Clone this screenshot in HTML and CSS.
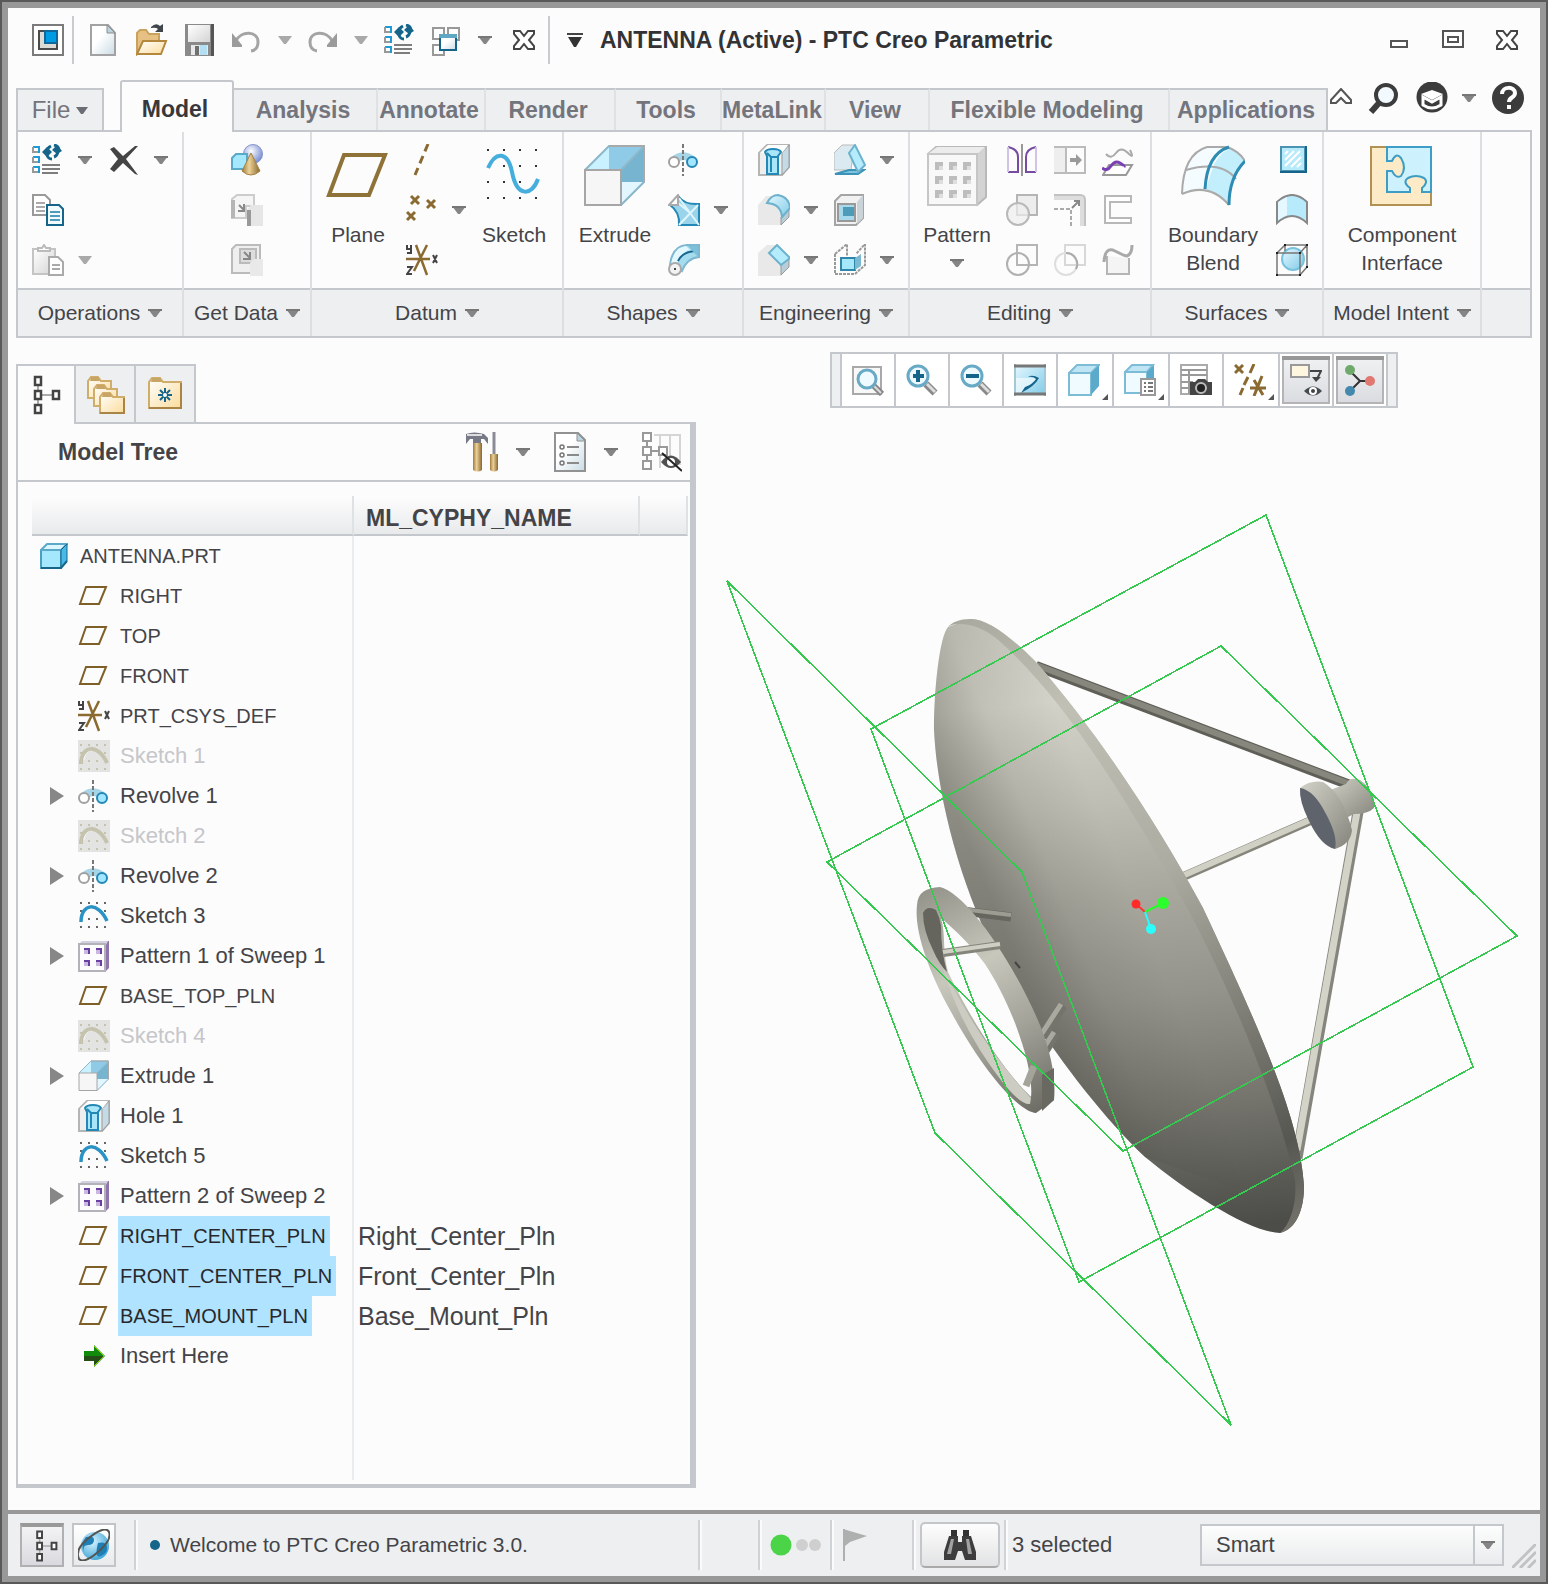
FILE: index.html
```html
<!DOCTYPE html>
<html lang="en">
<head>
<meta charset="utf-8">
<meta name="viewport" content="width=device-width, initial-scale=1">
<title>ANTENNA (Active) - PTC Creo Parametric</title>
<link rel="stylesheet" href="styles.css">
</head>
<body>
<svg class="defs" aria-hidden="true">
  <defs>
    <linearGradient id="gBlue" x1="0" y1="0" x2="1" y2="1"><stop offset="0" stop-color="#e6f8ff"/><stop offset="1" stop-color="#7fcbe8"/></linearGradient>
    <linearGradient id="gPaper" x1="0" y1="0" x2="1" y2="1"><stop offset=".4" stop-color="#fff"/><stop offset="1" stop-color="#c9dbe4"/></linearGradient>
    <linearGradient id="gFolder" x1="0" y1="0" x2="1" y2="1"><stop offset="0" stop-color="#fff"/><stop offset="1" stop-color="#fbdc9c"/></linearGradient>
    <linearGradient id="gWood" x1="0" y1="0" x2="1" y2="0"><stop offset="0" stop-color="#a07a3c"/><stop offset=".4" stop-color="#ecd298"/><stop offset="1" stop-color="#8a6630"/></linearGradient>
    <linearGradient id="gGrey" x1="0" y1="0" x2="1" y2="1"><stop offset="0" stop-color="#fff"/><stop offset="1" stop-color="#d4d4d4"/></linearGradient>
    <radialGradient id="gBall" cx=".4" cy=".35" r=".7"><stop offset="0" stop-color="#fff"/><stop offset="1" stop-color="#6e86cf"/></radialGradient>
    <radialGradient id="gGlobe" cx=".4" cy=".35" r=".7"><stop offset="0" stop-color="#d8f4ff"/><stop offset="1" stop-color="#3aa3d6"/></radialGradient>
    <linearGradient id="dishV" gradientUnits="userSpaceOnUse" x1="1050" y1="620" x2="1120" y2="1240"><stop offset="0" stop-color="#c9c8be"/><stop offset=".13" stop-color="#d3d2c8"/><stop offset=".3" stop-color="#bfbeb4"/><stop offset=".45" stop-color="#a9a89f"/><stop offset=".62" stop-color="#94938b"/><stop offset=".8" stop-color="#74746d"/><stop offset="1" stop-color="#4c4c48"/></linearGradient>
    <linearGradient id="dishH" gradientUnits="userSpaceOnUse" x1="934" y1="760" x2="1056" y2="710"><stop offset="0" stop-color="#45453e" stop-opacity=".42"/><stop offset=".5" stop-color="#45453e" stop-opacity=".12"/><stop offset="1" stop-color="#45453e" stop-opacity="0"/></linearGradient>
    <linearGradient id="rim" gradientUnits="userSpaceOnUse" x1="960" y1="620" x2="1300" y2="1230"><stop offset="0" stop-color="#a9a99f"/><stop offset=".18" stop-color="#c0c0b5"/><stop offset=".45" stop-color="#acaca2"/><stop offset=".7" stop-color="#7c7c74"/><stop offset=".88" stop-color="#575752"/><stop offset="1" stop-color="#74746c"/></linearGradient>
    <linearGradient id="ring" gradientUnits="userSpaceOnUse" x1="930" y1="890" x2="1050" y2="1110"><stop offset="0" stop-color="#96958c"/><stop offset=".35" stop-color="#c8c7bc"/><stop offset=".65" stop-color="#a3a299"/><stop offset="1" stop-color="#6a6a63"/></linearGradient>
    <linearGradient id="horn" x1="0" y1="0" x2="1" y2="1"><stop offset="0" stop-color="#d3d2c8"/><stop offset="1" stop-color="#84847c"/></linearGradient>

    <symbol id="regen" viewBox="0 0 32 32"><path d="M1 3h6M7 2v7M1 13h6M7 12v7M1 23h6M7 22v7" stroke="#1e9ad6" stroke-width="2"/><path d="M1 3v5h5M1 13v5h5M1 23v5h5" fill="none" stroke="#999" stroke-width="2"/><path d="M10 21h18M10 25h18M10 29h16" stroke="#7d7d7d" stroke-width="2"/><path d="M14 8q1-4 5-6M27 7q0-5-5-6M15 11q1 4 5 4M26 8q-1 4-4 5" fill="none" stroke="#15658a" stroke-width="3"/><path d="M10 8l5-5 5 5-5 5zM20 6l5-5 5 6-5 3z" fill="#15658a"/></symbol>
    <symbol id="plane" viewBox="0 0 32 32"><path d="M8 7h20l-7 17H2z" fill="none" stroke="#7f5f28" stroke-width="2"/></symbol>
    <symbol id="csys" viewBox="0 0 32 32"><path d="M0 15h24M10 1l11 30M21 1 8 27" stroke="#8a6a30" stroke-width="2.500" fill="none"/><path d="M1 1v4h4V1m0 3v5H1M1 23h5l-5 7h5M27 11l4 8M31 11l-4 8" fill="none" stroke="#444" stroke-width="2"/></symbol>
    <symbol id="sketch" viewBox="0 0 32 32"><path d="M2 3h2m6 0h2m6 0h2m6 0h2M2 11h2m22 0h2M10 19h2m6 0h2M2 27h2m6 0h2m6 0h2m6 0h2" stroke="#666" stroke-width="2"/><path d="M3 22C3 3 20 1 29 21" fill="none" stroke="#2a92c4" stroke-width="3.500"/></symbol>
    <symbol id="sketch-off" viewBox="0 0 32 32"><path d="M0 0h32v32H0z" fill="#e3e3e2"/><path d="M2 5h2m6 0h2m6 0h2m6 0h2M2 13h2m22 0h2M10 21h2m6 0h2M2 29h2m6 0h2m6 0h2m6 0h2" stroke="#c5c3ae" stroke-width="2"/><path d="M5 20C7 8 20 5 28 20" fill="none" stroke="#fff" stroke-width="2"/><path d="M3 24C3 5 20 3 29 23" fill="none" stroke="#c5c3ae" stroke-width="4"/></symbol>
    <symbol id="revolve" viewBox="0 0 32 32"><path d="M2 16C6 6 24 6 29 16l-8 2q-5-4-11 0z" fill="#a7d5e8"/><circle cx="6" cy="18" r="5" fill="#fff" stroke="#a0a0a0" stroke-width="2"/><circle cx="24" cy="18" r="5" fill="#a2e6ff" stroke="#2388b5" stroke-width="2"/><path d="M15 0v32" stroke="#777" stroke-width="2" stroke-dasharray="4 2"/></symbol>
    <symbol id="extrude" viewBox="0 0 64 64"><path d="M2 26 26 2h36L38 26z" fill="#c9f1ff"/><path d="M26 2h36L38 26H26z" fill="#8fcbe6"/><path d="M38 26 62 2v36L38 62z" fill="#76b4d0"/><path d="M38 62V38h24z" fill="#e1f6ff"/><path d="M2 26 26 2h35v36L38 61M38 26 61 2" fill="none" stroke="#8db8ca" stroke-width="2"/><path d="M26 2h35v36" fill="none" stroke="#a9a9a9" stroke-width="2"/><path d="M2 26h36v35H2z" fill="#f6f6f6" stroke="#a6a6a6" stroke-width="2"/></symbol>
    <symbol id="hole" viewBox="0 0 32 32"><path d="M1 9 9 1h22v22l-7 8H1z" fill="#eee" stroke="#b5b5b5" stroke-width="2"/><path d="M24 9l7-8v22l-7 8z" fill="#c4dbe6" stroke="#999"/><path d="M2 9l8-8h20l-6 8z" fill="#fff"/><path d="M7 8c2-4 14-4 16 0l-3 4v18H9V12z" fill="#a9e6fa" stroke="#2388b5" stroke-width="2"/><path d="M9 9l4 4h6M13 13v15" fill="none" stroke="#2388b5" stroke-width="2"/></symbol>
    <symbol id="pattern-s" viewBox="0 0 32 32"><path d="M5 1h26v27l-3 3z" fill="#8e76ad"/><path d="M1 4 4 1h26l-2 4z" fill="#d5cfe2"/><path d="M1 4h26v27H1z" fill="#fdfdff" stroke="#b2b2b8" stroke-width="2"/><path d="M6 8h6v6H6zM18 8h6v6h-6zM6 20h6v6H6zM18 20h6v6h-6z" fill="#c9b8e0"/><path d="M6 9h5v5M18 9h5v5M6 21h5v5M18 21h5v5" fill="none" stroke="#6b3fa0" stroke-width="2"/></symbol>
    <symbol id="part" viewBox="0 0 28 26"><path d="M1 7h20v18H1z" fill="#a5e7fd" stroke="#4a9fc0" stroke-width="2"/><path d="M1 7 7 1h20l-6 6z" fill="#dcf6ff" stroke="#5aa9c8" stroke-width="2"/><path d="M21 7l6-6v17l-6 7z" fill="#49b9e8" stroke="#17658a" stroke-width="1"/><path d="M1 25h20l6-7" fill="none" stroke="#17658a" stroke-width="2"/></symbol>
    <symbol id="arrow-in" viewBox="0 0 32 32"><path d="M6 11h10V5l11 11-11 11v-6H6z" fill="#118b0c"/><path d="M6 16h20L16 26v-5H6z" fill="#264d18"/><path d="M16 6l10 10-10 10" fill="none" stroke="#86c800" stroke-width="1"/></symbol>
    <symbol id="tree" viewBox="0 0 40 40"><path d="M12 4v32M12 20h14" stroke="#aaa" stroke-width="2"/><path d="M9 2h6v8H9zM9 16h6v8H9zM9 30h6v8H9zM27 16h6v8h-6z" fill="#fff" stroke="#444" stroke-width="2.500"/></symbol>
    <symbol id="caret" viewBox="0 0 14 8"><path d="M0 0h14L8 8H6z" fill="#858585"/><path d="M0 1h14" stroke="#777" stroke-width="2"/></symbol>
    <symbol id="caret-off" viewBox="0 0 14 8"><path d="M0 0h14L8 8H6z" fill="#a9a9a9"/></symbol>
    <symbol id="twist" viewBox="0 0 14 18"><path d="M0 0l14 9L0 18z" fill="#878787"/></symbol>
    <symbol id="xmark" viewBox="0 0 24 24"><path d="M2 3h6l4 5 4-5h6v3l-5 6 5 6v3h-6l-4-5-4 5H2v-3l5-6-5-6z" fill="#fff" stroke="#444" stroke-width="2"/></symbol>
    <symbol id="lens" viewBox="0 0 32 32"><path d="M20 20l9 9" stroke="#888" stroke-width="7"/><path d="M21 20l8 8" stroke="#ddd" stroke-width="3"/><circle cx="12" cy="12" r="10" fill="#eefaff" stroke="#68a9c5" stroke-width="3"/></symbol>
  </defs>
</svg>

<div class="window">
  <header class="titlebar">
    <button class="ib" aria-label="System menu"><svg class="i32" viewBox="0 0 32 32"><path d="M1 1h30v30H1z" fill="#fff" stroke="#7b7b7b" stroke-width="2"/><path d="M7 7h18v18H7z" fill="#dcdcd6" stroke="#4a4a4a" stroke-width="2"/><path d="M13 7h12v12H13z" fill="#009be5" stroke="#10679a" stroke-width="2"/></svg></button>
    <span class="vsep"></span>
    <div class="quick">
      <button class="ib" aria-label="New"><svg class="i32" viewBox="0 0 32 32"><path d="M3 1h17l7 8v22H3z" fill="url(#gPaper)" stroke="#a2a2a2" stroke-width="2"/><path d="M19 1v8h8z" fill="#b9d3e0" stroke="#8d8d8d"/></svg></button>
      <button class="ib" aria-label="Open"><svg class="i32" viewBox="0 0 32 32"><path d="M1 30V9l3-3h6l3 4h10v8H9z" fill="#e6c183" stroke="#c9a35e" stroke-width="2"/><path d="M1 30l6-13h23l-5 13z" fill="url(#gFolder)" stroke="#b3883e" stroke-width="2"/><path d="M15 3q5-5 9-1l3-2v8h-8l3-3q-2-2-7-1z" fill="#40474c"/></svg></button>
      <button class="ib" aria-label="Save"><svg class="i32" viewBox="0 0 32 32"><path d="M1 0h28v32H1z" fill="#8a8a8a"/><path d="M4 1h22v17H4z" fill="url(#gGrey)"/><path d="M27 0h3v32h-3z" fill="#555"/><path d="M7 21h17v10H7z" fill="#e8e8e8"/><path d="M11 22h4v9h-4z" fill="#707070"/><path d="M16 21h7v10h-7z" fill="#b4dff2"/></svg></button>
      <span class="split"><button class="ib" aria-label="Undo"><svg class="i32" viewBox="0 0 32 32"><path d="M4 17C9 6 26 7 26 18q0 8-7 9" fill="none" stroke="#a4a4a4" stroke-width="3"/><path d="M0 9l10 12v2H0z" fill="#9b9b9b"/></svg></button><button class="cb" aria-label="Undo list"><svg class="car"><use href="#caret-off"/></svg></button></span>
      <span class="split"><button class="ib" aria-label="Redo"><svg class="i32" viewBox="0 0 32 32"><path d="M24 17C19 6 2 7 2 18q0 8 7 9" fill="none" stroke="#a4a4a4" stroke-width="3"/><path d="M29 9 19 21v2h10z" fill="#9b9b9b"/></svg></button><button class="cb" aria-label="Redo list"><svg class="car"><use href="#caret-off"/></svg></button></span>
      <button class="ib" aria-label="Regenerate"><svg class="i32"><use href="#regen"/></svg></button>
      <span class="split"><button class="ib" aria-label="Windows"><svg class="i32" viewBox="0 0 32 32"><path d="M1 4h11v11H1zM16 4h11v12H16zM1 21h11v10H1z" fill="#fff" stroke="#999" stroke-width="2"/><path d="M8 12h16v14H8z" fill="url(#gPaper)" stroke="#15658a" stroke-width="2"/><path d="M7 12h18" stroke="#5fa8c4" stroke-width="4"/></svg></button><button class="cb" aria-label="Window list"><svg class="car"><use href="#caret"/></svg></button></span>
      <button class="ib" aria-label="Close window"><svg class="i24"><use href="#xmark"/></svg></button>
    </div>
    <span class="vsep"></span>
    <button class="ib more" aria-label="Customize toolbar"><svg width="16" height="14" viewBox="0 0 16 14"><path d="M0 1h16" stroke="#444" stroke-width="2"/><path d="M1 4h14L9 14H7z" fill="#333"/></svg></button>
    <h1 class="title">ANTENNA (Active) - PTC Creo Parametric</h1>
    <div class="winctl">
      <button class="ib" aria-label="Minimize"><svg class="i32" viewBox="0 0 32 32"><path d="M8 17h16v6H8z" fill="#fff" stroke="#555" stroke-width="2"/></svg></button>
      <button class="ib" aria-label="Maximize"><svg class="i32" viewBox="0 0 32 32"><path d="M6 7h20v16H6z" fill="#fff" stroke="#555" stroke-width="2"/><path d="M11 13h10v5H11z" fill="#fff" stroke="#555" stroke-width="2"/></svg></button>
      <button class="ib" aria-label="Close"><svg class="i24"><use href="#xmark"/></svg></button>
    </div>
  </header>

  <nav class="tabs" aria-label="Ribbon tabs">
    <button class="tab file">File <svg width="12" height="7" viewBox="0 0 12 7"><path d="M0 0h12L7 7H5z" fill="#6c6c74"/></svg></button>
    <button class="tab model">Model</button>
    <button class="tab t-analysis">Analysis</button>
    <button class="tab t-annotate">Annotate</button>
    <button class="tab t-render">Render</button>
    <button class="tab t-tools">Tools</button>
    <button class="tab t-metalink">MetaLink</button>
    <button class="tab t-view">View</button>
    <button class="tab t-flex">Flexible Modeling</button>
    <button class="tab t-apps">Applications</button>
    <div class="help">
      <button class="ib" aria-label="Collapse ribbon"><svg width="22" height="20" viewBox="0 0 22 20"><path d="M1 12 11 1l10 11v3h-5l-5-5-5 5H1z" fill="#fff" stroke="#555" stroke-width="2"/></svg></button>
      <button class="ib" aria-label="Search"><svg class="i32" viewBox="0 0 32 32"><path d="M11 21l-8 9" stroke="#3c3c3c" stroke-width="6"/><circle cx="18" cy="13" r="10" fill="#f3faff" stroke="#3c3c3c" stroke-width="4"/></svg></button>
      <span class="split"><button class="ib" aria-label="Learning"><svg class="i32" viewBox="0 0 32 32"><circle cx="16" cy="15" r="15.500" fill="#3c3c3c"/><path d="M5 12l11-4 11 4-11 6z" fill="#fff"/><path d="M7 15l9 5 9-5v8q-9 6-18 0z" fill="none" stroke="#fff" stroke-width="3"/></svg></button><button class="cb" aria-label="Learning list"><svg class="car"><use href="#caret"/></svg></button></span>
      <button class="ib" aria-label="Help"><svg class="i32" viewBox="0 0 32 32"><circle cx="16" cy="16" r="16" fill="#3c3c3c"/><path d="M10 12c0-8 13-8 13-1 0 5-6 4-6 9" fill="none" stroke="#fff" stroke-width="4"/><path d="M15 23h4v4h-4z" fill="#fff"/></svg></button>
    </div>
  </nav>

  <section class="ribbon" aria-label="Model">
    <div class="grp g-ops">
      <div class="body"><div class="col">
        <div class="row"><span class="split"><button class="ib" aria-label="Regenerate"><svg class="i32"><use href="#regen"/></svg></button><button class="cb" aria-label="More"><svg class="car"><use href="#caret"/></svg></button></span>
        <span class="split"><button class="ib" aria-label="Delete"><svg class="i32" viewBox="0 0 32 32"><path d="M2 5l4-2 9 9L27 2l3 0-12 13 12 16-3-1-12-11-9 9-4-3 8-10z" fill="#444"/></svg></button><button class="cb" aria-label="More"><svg class="car"><use href="#caret"/></svg></button></span></div>
        <button class="ib" aria-label="Copy"><svg class="i32" viewBox="0 0 32 32"><path d="M1 1h12l5 5v15H1z" fill="#fff" stroke="#999" stroke-width="2"/><path d="M4 9h9M4 13h9M4 17h9" stroke="#aaa" stroke-width="2"/><path d="M15 11h12l4 4v16H15z" fill="#f0faff" stroke="#15658a" stroke-width="2"/><path d="M18 18h10M18 22h10M18 26h10" stroke="#4d9cbd" stroke-width="2"/></svg></button>
        <span class="split"><button class="ib" aria-label="Paste"><svg class="i32" viewBox="0 0 32 32"><path d="M1 5h22v25H1z" fill="url(#gGrey)" stroke="#c4c4c4" stroke-width="2"/><path d="M6 7V4h4l2-3 2 3h4v3z" fill="#fff" stroke="#bbb" stroke-width="2"/><path d="M17 13h9l5 5v13H17z" fill="#fff" stroke="#aaa" stroke-width="2"/><path d="M20 21h8M20 25h8" stroke="#aaa" stroke-width="2"/></svg></button><button class="cb" aria-label="More"><svg class="car"><use href="#caret-off"/></svg></button></span>
      </div></div>
      <button class="foot">Operations<svg class="car"><use href="#caret"/></svg></button>
    </div>
    <div class="grp g-get">
      <div class="body center"><div class="col">
        <button class="ib" aria-label="User-defined feature"><svg class="i32" viewBox="0 0 32 32"><circle cx="22" cy="10" r="9.500" fill="url(#gBall)" stroke="#8796cc"/><path d="M1 14l4-4h11v15H1z" fill="#a5e7fd" stroke="#5aa9c8" stroke-width="2"/><path d="M20 9l9 18q-9 8-18 0z" fill="url(#gWood)" stroke="#a5813f"/></svg></button>
        <button class="ib" aria-label="Copy geometry"><svg class="i32" viewBox="0 0 32 32"><path d="M1 5 6 1h17v11h-8v12H1z" fill="#f5f5f5" stroke="#ccc" stroke-width="2"/><path d="M0 6h4v18H0z" fill="#b5b5b5"/><path d="M16 16l4-5h12v21H16z" fill="#e6e6e6"/><path d="M16 16h4v16h-4z" fill="#999"/><path d="M8 11l5 5m0-6v7H7" fill="none" stroke="#888" stroke-width="2"/></svg></button>
        <button class="ib" aria-label="Shrinkwrap"><svg class="i32" viewBox="0 0 32 32"><path d="M1 5 5 1h24v15l-8 13H1z" fill="#efefef" stroke="#bbb" stroke-width="2"/><path d="M9 5h16v14H9z" fill="#ddd" stroke="#bbb" stroke-width="2"/><path d="M19 19l4-4h9v17H19z" fill="#e9e9e9"/><path d="M13 8l6 6m0-6v7h-7" fill="none" stroke="#888" stroke-width="2"/></svg></button>
      </div></div>
      <button class="foot">Get Data<svg class="car"><use href="#caret"/></svg></button>
    </div>
    <div class="grp g-datum">
      <div class="body">
        <button class="big"><svg class="i64" viewBox="0 0 64 64"><path d="M18 11h41L43 51H3z" fill="none" stroke="#8f7238" stroke-width="4"/></svg><span>Plane</span></button>
        <div class="col">
          <button class="ib" aria-label="Axis"><svg class="i32" viewBox="0 0 32 32"><path d="M22 0 9 31" stroke="#8a6a30" stroke-width="3" stroke-dasharray="8 5"/></svg></button>
          <span class="split"><button class="ib" aria-label="Point"><svg class="i32" viewBox="0 0 32 32"><path d="M5 2l8 8M13 2l-8 8M21 6l8 8M29 6l-8 8M1 18l8 8M9 18l-8 8" stroke="#8a6a30" stroke-width="3"/></svg></button><button class="cb" aria-label="More"><svg class="car"><use href="#caret"/></svg></button></span>
          <button class="ib" aria-label="Coordinate system"><svg class="i32"><use href="#csys"/></svg></button>
        </div>
        <button class="big"><svg class="i64" viewBox="0 0 64 64"><path d="M5 6h2m14 0h2m14 0h2m14 0h2M21 22h2m14 0h2m14 0h2M5 38h2m14 0h2m14 0h2M5 54h2m14 0h2m14 0h2m14 0h2" stroke="#333" stroke-width="2"/><path d="M6 24C14 6 26 8 30 28c5 26 20 24 26 7" fill="none" stroke="#45aedc" stroke-width="4"/></svg><span>Sketch</span></button>
      </div>
      <button class="foot">Datum<svg class="car"><use href="#caret"/></svg></button>
    </div>
    <div class="grp g-shapes">
      <div class="body">
        <button class="big"><svg class="i64"><use href="#extrude"/></svg><span>Extrude</span></button>
        <div class="col">
          <button class="ib" aria-label="Revolve"><svg class="i32"><use href="#revolve"/></svg></button>
          <span class="split"><button class="ib" aria-label="Swept blend"><svg class="i32" viewBox="0 0 32 32"><path d="M11 3q6 8 20 7v21H11Q12 18 2 11z" fill="#9ad4ea" stroke="#2388b5" stroke-width="2"/><path d="M11 4l20 27M30 11 11 31M9 8l12 10" stroke="#dff5fd" stroke-width="2"/><path d="M10 1v10H1z" fill="#fff" stroke="#aaa" stroke-width="2"/></svg></button><button class="cb" aria-label="More"><svg class="car"><use href="#caret"/></svg></button></span>
          <button class="ib" aria-label="Sweep"><svg class="i32" viewBox="0 0 32 32"><path d="M2 21Q4 2 19 1h12v12q-12 1-17 14z" fill="#a6dcf0" stroke="#7db8d0" stroke-width="2"/><path d="M3 20Q6 3 18 2l4 4q-9 2-12 12z" fill="#e3f7ff"/><path d="M10 17q5-10 19-10" fill="none" stroke="#17658a" stroke-width="2"/><path d="M20 2 30 13V2z" fill="#7cc0da"/><circle cx="7" cy="25" r="6" fill="#f3f3f3" stroke="#aaa" stroke-width="2"/><path d="M6 24h2v2H6z" fill="#444"/></svg></button>
        </div>
      </div>
      <button class="foot">Shapes<svg class="car"><use href="#caret"/></svg></button>
    </div>
    <div class="grp g-eng">
      <div class="body">
        <div class="col">
          <button class="ib" aria-label="Hole"><svg class="i32"><use href="#hole"/></svg></button>
          <span class="split"><button class="ib" aria-label="Round"><svg class="i32" viewBox="0 0 32 32"><path d="M0 11 8 2h10l13 11v9l-8 9H0z" fill="#e9e9e9"/><path d="M23 23l8-8v8l-8 8z" fill="#b9cdd8" stroke="#999"/><path d="M9 9q4-8 11-8 11 2 12 13l-8 9Q23 10 9 9z" fill="url(#gBlue)" stroke="#6db2cd" stroke-width="2"/></svg></button><button class="cb" aria-label="More"><svg class="car"><use href="#caret"/></svg></button></span>
          <span class="split"><button class="ib" aria-label="Chamfer"><svg class="i32" viewBox="0 0 32 32"><path d="M0 9 9 1h9l13 13v9l-8 9H0z" fill="#e9e9e9"/><path d="M23 21l8-7v9l-8 8z" fill="#b9cdd8" stroke="#999"/><path d="M11 9l8-8 13 13-9 7z" fill="#b5ecfd" stroke="#6db2cd" stroke-width="2"/></svg></button><button class="cb" aria-label="More"><svg class="car"><use href="#caret"/></svg></button></span>
        </div>
        <div class="col">
          <span class="split"><button class="ib" aria-label="Draft"><svg class="i32" viewBox="0 0 32 32"><path d="M0 9 8 1h12l-3 25H0z" fill="#dbe9f0" stroke="#bbb"/><path d="M1 30l14-4h15l-6 4z" fill="#7fc4de" stroke="#3b93b8" stroke-width="2"/><path d="M15 9l6-8 10 20-7 7z" fill="#b5ecfd" stroke="#6db2cd" stroke-width="2"/></svg></button><button class="cb" aria-label="More"><svg class="car"><use href="#caret"/></svg></button></span>
          <button class="ib" aria-label="Shell"><svg class="i32" viewBox="0 0 32 32"><path d="M1 7 7 1h22v23l-7 7H1z" fill="#f1f1f1" stroke="#a4a4a4" stroke-width="2"/><path d="M23 8l6-7v23l-6 6z" fill="#c9d3d8"/><path d="M4 10h17v17H4z" fill="#a7d8ec" stroke="#999" stroke-width="2"/><path d="M9 13h11v9H9z" fill="#4c9bb9"/></svg></button>
          <span class="split"><button class="ib" aria-label="Rib"><svg class="i32" viewBox="0 0 32 32"><path d="M1 10 13 0v12M1 10v20h20L31 21V0l-9 10" fill="none" stroke="#999" stroke-width="2" stroke-dasharray="3 1"/><path d="M7 14h14v12H7z" fill="#a5e7fd" stroke="#2f86a8" stroke-width="2"/><path d="M21 14l6-4v12l-6 4z" fill="#7ab9d1"/></svg></button><button class="cb" aria-label="More"><svg class="car"><use href="#caret"/></svg></button></span>
        </div>
      </div>
      <button class="foot">Engineering<svg class="car"><use href="#caret"/></svg></button>
    </div>
    <div class="grp g-edit">
      <div class="body">
        <button class="big"><svg class="i64" viewBox="0 0 64 64"><path d="M3 10 11 3h50v50l-9 8z" fill="#d3d3d3" stroke="#b9b9b9" stroke-width="2"/><path d="M4 9l8-6h48l-8 7z" fill="#ececec"/><path d="M3 10h49v51H3z" fill="#f8f8f8" stroke="#c6c6c6" stroke-width="2"/><path d="M10 18h8v8h-8zM24 18h8v8h-8zM38 18h8v8h-8zM10 32h8v8h-8zM24 32h8v8h-8zM38 32h8v8h-8zM10 46h8v8h-8zM24 46h8v8h-8zM38 46h8v8h-8z" fill="#bdbdbd"/><path d="M14 22h4v4h-4zM28 22h4v4h-4zM42 22h4v4h-4zM14 36h4v4h-4zM28 36h4v4h-4zM42 36h4v4h-4zM14 50h4v4h-4zM28 50h4v4h-4zM42 50h4v4h-4z" fill="#dedede"/></svg><span>Pattern</span><svg class="car"><use href="#caret"/></svg></button>
        <div class="col">
          <button class="ib" aria-label="Mirror"><svg class="i32" viewBox="0 0 32 32"><path d="M2 3q10 2 10 10v15H2" fill="none" stroke="#764ba0" stroke-width="2"/><path d="M30 3q-10 2-10 10v15h10" fill="none" stroke="#764ba0" stroke-width="2"/><path d="M2 3v25M30 3v25" stroke="#cfc3e6" stroke-width="2"/><path d="M16 0v32" stroke="#999" stroke-width="2"/></svg></button>
          <button class="ib" aria-label="Merge"><svg class="i32" viewBox="0 0 32 32"><path d="M11 1h20v20H11z" fill="#ededed" stroke="#b5b5b5" stroke-width="2"/><circle cx="12" cy="20" r="11" fill="#eee" fill-opacity=".7" stroke="#b9b9b9" stroke-width="2"/></svg></button>
          <button class="ib" aria-label="Intersect"><svg class="i32" viewBox="0 0 32 32"><path d="M11 1h20v20H11z" fill="none" stroke="#b5b5b5" stroke-width="2"/><circle cx="12" cy="20" r="11" fill="none" stroke="#b0b0b0" stroke-width="2"/></svg></button>
        </div>
        <div class="col">
          <button class="ib" aria-label="Extend"><svg class="i32" viewBox="0 0 32 32"><path d="M0 3h12v26H0z" fill="#eee"/><path d="M0 3h31v26H0M12 3v26" fill="none" stroke="#bbb" stroke-width="2"/><path d="M16 14h6v-4l6 6-6 6v-4h-6z" fill="#9a9a9a"/></svg></button>
          <button class="ib" aria-label="Offset"><svg class="i32" viewBox="0 0 32 32"><path d="M0 1h26l5 4v27h-5V6H0z" fill="#ddd"/><path d="M0 1h26q5 0 5 5v26" fill="none" stroke="#c2c2c2" stroke-width="2"/><path d="M0 15h17v17" fill="none" stroke="#aaa" stroke-width="2" stroke-dasharray="4 2"/><path d="M18 14l7-7m-5 0h5v5" fill="none" stroke="#888" stroke-width="2"/></svg></button>
          <button class="ib" aria-label="Trim"><svg class="i32" viewBox="0 0 32 32"><path d="M11 1h20v20H11z" fill="none" stroke="#d8d8d8" stroke-width="2"/><circle cx="12" cy="20" r="11" fill="none" stroke="#dedede" stroke-width="2"/><path d="M12 9a11 11 0 0 1 10 16" fill="none" stroke="#aaa" stroke-width="2"/></svg></button>
        </div>
        <div class="col">
          <button class="ib" aria-label="Project"><svg class="i32" viewBox="0 0 32 32"><path d="M4 10q5 6 10-1t12 0 2-3" fill="none" stroke="#aaa" stroke-width="2"/><path d="M7 21h23l-6 10H1z" fill="#fff" stroke="#999" stroke-width="2"/><path d="M0 24q5 4 9-2t9-3 4 4" fill="none" stroke="#7b3fb5" stroke-width="3"/></svg></button>
          <button class="ib" aria-label="Thicken"><svg class="i32" viewBox="0 0 32 32"><path d="M29 2H3v27h26v-5H8V8h21z" fill="#fff" stroke="#b8b8b8" stroke-width="2"/></svg></button>
          <button class="ib" aria-label="Solidify"><svg class="i32" viewBox="0 0 32 32"><path d="M5 12v18h22V14" fill="#f4f4f4" stroke="#b5b5b5" stroke-width="2"/><path d="M2 18Q3 2 13 7t12 5q5-2 5-11" fill="none" stroke="#a9a9a9" stroke-width="3"/></svg></button>
        </div>
      </div>
      <button class="foot">Editing<svg class="car"><use href="#caret"/></svg></button>
    </div>
    <div class="grp g-surf">
      <div class="body">
        <button class="big"><svg class="i64" viewBox="0 0 64 64"><path d="M1 50Q2 10 26 3h20q12 4 18 14-16 12-16 44Q26 38 1 50z" fill="#f5fcff"/><path d="M31 26q18 0 22 8-6 12-6 27-8-10-22-16zM31 26Q36 10 50 4q9 5 13 13-8 8-10 17-4-8-22-8z" fill="#c3eefc"/><path d="M1 50Q2 10 26 3h20q12 4 18 14M5 26q35-10 50 9M1 50q27-12 47 11" fill="none" stroke="#aaa" stroke-width="2"/><path d="M24 45Q26 10 48 3M48 61q0-28 16-44" fill="none" stroke="#2d8cb3" stroke-width="3"/></svg><span>Boundary<br>Blend</span></button>
        <div class="col">
          <button class="ib" aria-label="Fill"><svg class="i32" viewBox="0 0 32 32"><path d="M5 3h24v24H5z" fill="#b7eafb" stroke="#4b93b0" stroke-width="2"/><path d="M9 22 24 7M9 16l9-9M15 23l10-10M9 10l3-3M21 23l4-4" stroke="#fff" stroke-width="2"/><path d="M4 28h26V2" fill="none" stroke="#15658a" stroke-width="2"/></svg></button>
          <button class="ib" aria-label="Style"><svg class="i32" viewBox="0 0 32 32"><path d="M1 29V8q15-14 30 0v21q-15-14-30 0z" fill="#b7eafb" stroke="#888" stroke-width="2"/><path d="M2 26V8l9-5v18z" fill="#e6f8ff"/></svg></button>
          <button class="ib" aria-label="Freestyle"><svg class="i32" viewBox="0 0 32 32"><circle cx="17" cy="15" r="11" fill="url(#gBlue)" stroke="#79c2dd" stroke-width="2"/><path d="M1 9h23v22H1zM1 9l8-8h22v22l-7 8M24 9l7-8M9 1v6" fill="none" stroke="#777" stroke-width="1.500"/><path d="M0 8h2v2H0zM23 8h2v2h-2zM0 30h2v2H0zM23 30h2v2h-2zM30 0h2v2h-2zM30 22h2v2h-2zM8 0h2v2H8z" fill="#222"/></svg></button>
        </div>
      </div>
      <button class="foot">Surfaces<svg class="car"><use href="#caret"/></svg></button>
    </div>
    <div class="grp g-intent">
      <div class="body center">
        <button class="big"><svg class="i64" viewBox="0 0 64 64"><path d="M1 3h60v58H1z" fill="#fdebc8" stroke="#b29252" stroke-width="2"/><path d="M17 3h44v45h-9v-4q7-6 2-10-8-4-16 0-6 4 2 10v4H17V27h5q4 8 9 5 6-8 0-18-5-6-9 3h-5z" fill="#cdf1fd" stroke="#3d9dc4" stroke-width="2"/></svg><span>Component<br>Interface</span></button>
      </div>
      <button class="foot">Model Intent<svg class="car"><use href="#caret"/></svg></button>
    </div>
    <div class="grp g-rest"><div class="body"></div><div class="foot"></div></div>
  </section>

  <main class="main">
    <section class="side">
      <div class="sidetabs">
        <button class="stab on" aria-label="Model Tree"><svg width="40" height="40"><use href="#tree"/></svg></button>
        <button class="stab" aria-label="Folder Browser"><svg width="40" height="40" viewBox="0 0 40 40"><g fill="url(#gFolder)" stroke="#d0ad69" stroke-width="2"><path d="M3 7l3-4h7l3 4h10v17H3z"/><path d="M9 15l3-4h7l3 4h10v17H9z"/><path d="M15 23l3-4h7l3 4h11v16H15z"/></g><path d="M6 3h7l2 4H5zM12 11h7l2 4H11zM18 19h7l2 4H17z" fill="#c8a564"/><path d="M15 39h24V24" fill="none" stroke="#a98445" stroke-width="2"/></svg></button>
        <button class="stab" aria-label="Favorites"><svg width="40" height="40" viewBox="0 0 40 40"><path d="M4 8l3-4h8l3 4h18v26H4z" fill="url(#gFolder)" stroke="#d0ad69" stroke-width="2"/><path d="M7 4h8l2 4H6z" fill="#c8a564"/><path d="M4 34h32V9" fill="none" stroke="#a98445" stroke-width="2"/><path d="M20 14v14M13 21h14M15 16l10 10M25 16 15 26" stroke="#15658a" stroke-width="2"/><circle cx="20" cy="21" r="2" fill="#fff"/></svg></button>
      </div>
      <div class="panel">
        <div class="phead">
          <h2>Model Tree</h2>
          <span class="split wide"><button class="ib" aria-label="Settings"><svg width="32" height="40" viewBox="0 0 32 40"><path d="M0 2q8-3 18 0l4 4v6l-4-5h-3v4H7V7H4L0 12z" fill="#777a86"/><path d="M1 3h15" stroke="#ddd" stroke-width="2"/><path d="M7 11h9v27q-4 3-9 0z" fill="url(#gWood)"/><path d="M28 0v22" stroke="#8b8b98" stroke-width="3"/><path d="M24 22h8v16q-4 3-8 0z" fill="url(#gWood)"/></svg></button><button class="cb" aria-label="Settings list"><svg class="car"><use href="#caret"/></svg></button></span>
          <span class="split wide"><button class="ib" aria-label="Show"><svg width="32" height="40" viewBox="0 0 32 40"><path d="M1 1h23l7 7v31H1z" fill="url(#gPaper)" stroke="#929292" stroke-width="2"/><path d="M23 1v8h8z" fill="#b9d3e0" stroke="#929292"/><path d="M13 15h12M13 23h12M13 31h12" stroke="#8a8a8a" stroke-width="2"/><g fill="none" stroke="#777" stroke-width="1.500"><circle cx="8" cy="15" r="2"/><circle cx="8" cy="23" r="2"/><circle cx="8" cy="31" r="2"/></g></svg></button><button class="cb" aria-label="Show list"><svg class="car"><use href="#caret"/></svg></button></span>
          <button class="ib" aria-label="Hide columns"><svg width="40" height="40" viewBox="0 0 40 40"><path d="M12 3h26v30M18 4v32M28 4v20" fill="none" stroke="#d5d5d5" stroke-width="2"/><path d="M5 9v22M9 19h8" stroke="#999" stroke-width="2"/><path d="M1 1h8v8H1zM1 15h8v8H1zM1 29h8v8H1zM17 15h8v8h-8z" fill="#fff" stroke="#999" stroke-width="2"/><path d="M19 30q10-13 20 0-10 12-20 0z" fill="#505050"/><circle cx="29" cy="30" r="4" fill="#fff"/><path d="M20 21l20 18" stroke="#222" stroke-width="2"/></svg></button>
        </div>
        <div class="tree">
          <table>
            <colgroup><col class="c1"><col class="c2"><col class="c3"></colgroup>
            <thead><tr><th aria-label="Feature"></th><th>ML_CYPHY_NAME</th><th aria-label="Extra"></th></tr></thead>
            <tbody>
              <tr><td><div class="node root caps"><svg width="28" height="26"><use href="#part"/></svg><span>ANTENNA.PRT</span></div></td><td></td><td></td></tr>
              <tr><td><div class="node caps"><i></i><svg class="i32"><use href="#plane"/></svg><span>RIGHT</span></div></td><td></td><td></td></tr>
              <tr><td><div class="node caps"><i></i><svg class="i32"><use href="#plane"/></svg><span>TOP</span></div></td><td></td><td></td></tr>
              <tr><td><div class="node caps"><i></i><svg class="i32"><use href="#plane"/></svg><span>FRONT</span></div></td><td></td><td></td></tr>
              <tr><td><div class="node caps"><i></i><svg class="i32"><use href="#csys"/></svg><span>PRT_CSYS_DEF</span></div></td><td></td><td></td></tr>
              <tr><td><div class="node off"><i></i><svg class="i32"><use href="#sketch-off"/></svg><span>Sketch 1</span></div></td><td></td><td></td></tr>
              <tr><td><div class="node"><i><svg class="tw"><use href="#twist"/></svg></i><svg class="i32"><use href="#revolve"/></svg><span>Revolve 1</span></div></td><td></td><td></td></tr>
              <tr><td><div class="node off"><i></i><svg class="i32"><use href="#sketch-off"/></svg><span>Sketch 2</span></div></td><td></td><td></td></tr>
              <tr><td><div class="node"><i><svg class="tw"><use href="#twist"/></svg></i><svg class="i32"><use href="#revolve"/></svg><span>Revolve 2</span></div></td><td></td><td></td></tr>
              <tr><td><div class="node"><i></i><svg class="i32"><use href="#sketch"/></svg><span>Sketch 3</span></div></td><td></td><td></td></tr>
              <tr><td><div class="node"><i><svg class="tw"><use href="#twist"/></svg></i><svg class="i32"><use href="#pattern-s"/></svg><span>Pattern 1 of Sweep 1</span></div></td><td></td><td></td></tr>
              <tr><td><div class="node caps"><i></i><svg class="i32"><use href="#plane"/></svg><span>BASE_TOP_PLN</span></div></td><td></td><td></td></tr>
              <tr><td><div class="node off"><i></i><svg class="i32"><use href="#sketch-off"/></svg><span>Sketch 4</span></div></td><td></td><td></td></tr>
              <tr><td><div class="node"><i><svg class="tw"><use href="#twist"/></svg></i><svg class="i32"><use href="#extrude"/></svg><span>Extrude 1</span></div></td><td></td><td></td></tr>
              <tr><td><div class="node"><i></i><svg class="i32"><use href="#hole"/></svg><span>Hole 1</span></div></td><td></td><td></td></tr>
              <tr><td><div class="node"><i></i><svg class="i32"><use href="#sketch"/></svg><span>Sketch 5</span></div></td><td></td><td></td></tr>
              <tr><td><div class="node"><i><svg class="tw"><use href="#twist"/></svg></i><svg class="i32"><use href="#pattern-s"/></svg><span>Pattern 2 of Sweep 2</span></div></td><td></td><td></td></tr>
              <tr><td><div class="node caps sel"><i></i><svg class="i32"><use href="#plane"/></svg><span>RIGHT_CENTER_PLN</span></div></td><td>Right_Center_Pln</td><td></td></tr>
              <tr><td><div class="node caps sel"><i></i><svg class="i32"><use href="#plane"/></svg><span>FRONT_CENTER_PLN</span></div></td><td>Front_Center_Pln</td><td></td></tr>
              <tr><td><div class="node caps sel"><i></i><svg class="i32"><use href="#plane"/></svg><span>BASE_MOUNT_PLN</span></div></td><td>Base_Mount_Pln</td><td></td></tr>
              <tr><td><div class="node"><i></i><svg class="i32"><use href="#arrow-in"/></svg><span>Insert Here</span></div></td><td></td><td></td></tr>
            </tbody>
          </table>
          <div class="rest"></div>
        </div>
      </div>
    </section>

    <section class="view">
      <div class="gbar" role="toolbar" aria-label="Graphics">
        <span class="cap"></span>
        <button class="cell" aria-label="Refit"><svg class="i32" viewBox="0 0 32 32"><path d="M1 3h28v27H1z" fill="#f8f8f8" stroke="#a9a9a9" stroke-width="2"/><path d="M20 20l10 10" stroke="#888" stroke-width="6"/><path d="M21 21l8 8" stroke="#ddd" stroke-width="2"/><circle cx="15" cy="15" r="9" fill="#eefaff" stroke="#68a9c5" stroke-width="3"/></svg></button>
        <button class="cell" aria-label="Zoom In"><svg class="i32" viewBox="0 0 32 32"><use href="#lens" width="32" height="32"/><path d="M7 12h11M12 6v12" stroke="#15658a" stroke-width="4"/></svg></button>
        <button class="cell" aria-label="Zoom Out"><svg class="i32" viewBox="0 0 32 32"><use href="#lens" width="32" height="32"/><path d="M6 12h13" stroke="#15658a" stroke-width="4"/></svg></button>
        <button class="cell" aria-label="Repaint"><svg class="i32" viewBox="0 0 32 32"><path d="M0 1h32v30H0z" fill="url(#gBlue)"/><path d="M2 14h22Q20 22 7 29H2z" fill="#fff" fill-opacity=".6"/><path d="M1 0v32M31 0v32" stroke="#a5c8d5" stroke-width="2"/><path d="M0 2h32M0 30h32" stroke="#777" stroke-width="3"/><path d="M14 13q4-3 11 1Q21 22 7 29l4-6q8-3 11-8-3-3-8-2z" fill="#15658a"/></svg></button>
        <button class="cell w" aria-label="Display Style"><svg class="i32" viewBox="0 0 32 32"><path d="M1 9h22v22H1z" fill="#f0fbff" stroke="#7dbcd6" stroke-width="2"/><path d="M1 9 9 1h22l-8 8z" fill="#bfe4f3" stroke="#7dbcd6" stroke-width="2"/><path d="M23 9l8-8v21l-8 9z" fill="#5caacb"/></svg></button>
        <button class="cell w" aria-label="Saved Orientations"><svg class="i32" viewBox="0 0 32 32"><path d="M1 8h22v21H1z" fill="#f0fbff" stroke="#7dbcd6" stroke-width="2"/><path d="M1 8 8 1h21l-6 7z" fill="#bfe4f3" stroke="#7dbcd6" stroke-width="2"/><path d="M23 8l7-7v16l-7 9z" fill="#5caacb"/><path d="M17 15h14v16H17z" fill="#fff" stroke="#999" stroke-width="2"/><path d="M20 19h2m2 0h5M20 23h2m2 0h5M20 27h2m2 0h5" stroke="#777" stroke-width="2"/></svg></button>
        <button class="cell" aria-label="View Manager"><svg class="i32" viewBox="0 0 32 32"><path d="M1 1h26v29H1z" fill="#fff" stroke="#aaa" stroke-width="2"/><path d="M1 6h26M1 11h26M1 18h12M1 24h12M9 6v24" stroke="#999" stroke-width="2"/><path d="M10 18h5l3-3h7l3 3h4v13H10z" fill="#444"/><circle cx="21" cy="24" r="5" fill="#222" stroke="#bbb" stroke-width="2"/></svg></button>
        <button class="cell w" aria-label="Datum Display"><svg class="i32" viewBox="0 0 32 32"><path d="M1 1l8 8M9 1 1 9M20 0l-4 9M14 13l-4 8M9 24l-3 7M16 24h16M28 12l-8 20M20 16l9 15" stroke="#8a6a30" stroke-width="3"/></svg></button>
        <button class="cell press" aria-label="Annotation Display"><svg class="i32" viewBox="0 0 32 32"><path d="M1 1h18v12H1z" fill="#fff6e0" stroke="#999" stroke-width="2"/><path d="M20 7h11l-4 8" fill="none" stroke="#444" stroke-width="2"/><path d="M22 13h9l-5 5z" fill="#444"/><path d="M14 27q9-9 18 0-9 9-18 0z" fill="#444c50"/><circle cx="23" cy="27" r="3" fill="#444" stroke="#fff" stroke-width="2"/></svg></button>
        <button class="cell press" aria-label="Spin Center"><svg class="i32" viewBox="0 0 32 32"><path d="M6 7l10 10H26M6 27l10-10" fill="none" stroke="#333" stroke-width="2"/><circle cx="6" cy="6" r="5" fill="#6fa96b"/><circle cx="26" cy="17" r="5" fill="#e07770"/><circle cx="6" cy="27" r="5" fill="#4488ad"/></svg></button>
        <span class="cap end"></span>
      </div>
      <svg class="scene" viewBox="696 408 844 1102" role="img" aria-label="Antenna model">
        <path d="M1036 666 1350 785" stroke="#5f5f58" stroke-width="10"/><path d="M1036 665 1350 784" stroke="#87877e" stroke-width="6"/>
        <path d="M1358 812 1297 1158" stroke="#85857d" stroke-width="11"/><path d="M1357 812 1297 1150" stroke="#d3d3c8" stroke-width="7"/>
        <path d="M1180 878 1312 820" stroke="#85857c" stroke-width="9"/><path d="M1180 877 1312 819" stroke="#d0d0c5" stroke-width="6"/>
        <path d="M1325 792 1346 784q4-8 14-4 12 8 14 20v8q-6 6-20 6l-12 6z" fill="url(#horn)"/>
        <path d="M1300 788q10-8 23-6 20 12 29 48-1 14-17 19z" fill="url(#horn)"/>
        <path d="M1300 788q14 2 26 26 12 22 9 35-14-3-26-28-10-20-9-33z" fill="#5f646c"/>
        <path d="M970 619 948 627C940 636 934 686 934 730 938 810 968 905 1003 967 1030 1020 1090 1105 1145 1157 1190 1194 1250 1232 1280 1233 1296 1229 1304 1210 1304 1186 1300 1120 1262 1034 1203 908 1160 828 1100 735 1035 661 1008 634 985 618 970 619z" fill="url(#dishV)"/>
        <path d="M970 619 948 627C940 636 934 686 934 730 938 810 968 905 1003 967 1030 1020 1090 1105 1145 1157L1240 1190 1180 900 1040 660z" fill="url(#dishH)"/>
        <path d="M948 627C955 622 975 622 996 638 1060 694 1120 786 1192 917 1240 1010 1280 1112 1295 1180 1297 1200 1292 1222 1280 1233 1296 1229 1304 1210 1304 1186 1300 1120 1262 1034 1203 908 1160 828 1100 735 1035 661 1008 634 985 618 970 619 960 619 952 622 948 627z" fill="url(#rim)"/>
        <path d="M962 911 1011 917" stroke="#66665f" stroke-width="9"/><path d="M962 909 1011 915" stroke="#9c9c93" stroke-width="4"/>
        <path d="M1042 1037 1063 1005M1045 1050 1056 1033" stroke="#74746c" stroke-width="10"/><path d="M1041 1035 1061 1004M1043 1049 1054 1032" stroke="#a9a99f" stroke-width="5"/>
        <path fill-rule="evenodd" d="M917 905C918 892 926 888 940 887 965 893 1010 955 1040 1025 1052 1055 1056 1080 1054 1100L1036 1113C1020 1112 985 1075 950 1010 928 970 914 930 917 905zM941 918C946 935 942 950 948 972 965 1008 1000 1068 1031 1097 1034 1070 1014 1008 985 964 970 944 955 930 941 918z" fill="url(#ring)"/>
        <path d="M923 913q4-8 13-3 4 8 5 16 0 25 6 46-8-8-14-22-10-20-10-37z" fill="#65655e"/>
        <path d="M943 968q36 74 88 130l-1 6q-14 2-50-54-26-42-37-82z" fill="#cdccc2"/>
        <path d="M1042 1075v36l12-11V1068z" fill="#696962"/>
        <path d="M943 953 1000 945" stroke="#85857c" stroke-width="8"/><path d="M943 952 1000 944" stroke="#cfcfc4" stroke-width="4"/>
        <path d="M1026 1086 1034 1066" stroke="#a4a49a" stroke-width="7"/>
        <path d="M1015 962l5 6" stroke="#444" stroke-width="2"/>
        <g class="datum"><path d="M727 581 1022 872 1231 1425 935 1133z"/><path d="M871 729 1266 515 1473 1067 1079 1282z"/><path d="M827 862 1221 646 1517 936 1123 1151z"/></g>
        <path d="M1145 912 1136 904" stroke="#f33" stroke-width="2"/><path d="M1145 912 1163 903" stroke="#2f2" stroke-width="2"/><path d="M1145 912 1151 929" stroke="#2ff" stroke-width="2"/>
        <circle cx="1136" cy="904" r="4.500" fill="#ff2b2b"/><circle cx="1163" cy="903" r="6" fill="#2bff2b"/><circle cx="1151" cy="929" r="5" fill="#2bffff"/>
      </svg>
    </section>
  </main>

  <footer class="status">
    <button class="sb press2" aria-label="Navigator"><svg width="32" height="32" viewBox="-5 0 40 40"><use href="#tree" width="40" height="40"/></svg></button>
    <button class="sb" aria-label="Browser"><svg class="i32" viewBox="0 0 32 32"><circle cx="17" cy="17" r="14" fill="url(#gGlobe)"/><path d="M8 8q8-2 8 3t-6 5-4 7q-4-8 2-15zM20 14q8-2 9 4t-6 9-3-13z" fill="#1d7fb5"/><path d="M1 30Q-4 20 12 8T31 3q3 8-11 20T1 30z" fill="none" stroke="#555" stroke-width="2"/></svg></button>
    <span class="ssep"></span>
    <p class="msg"><span class="dot"></span>Welcome to PTC Creo Parametric 3.0.</p>
    <span class="ssep s1"></span>
    <span class="ssep s2"></span>
    <svg class="lamp" width="52" height="22" viewBox="0 0 52 22"><circle cx="11" cy="11" r="10.500" fill="#4bd448"/><circle cx="32" cy="11" r="6" fill="#cfcfcf"/><circle cx="45" cy="11" r="6" fill="#cfcfcf"/></svg>
    <span class="ssep s3"></span>
    <svg class="flag" width="26" height="32" viewBox="0 0 26 32"><path d="M1 0v32" stroke="#aeb0b0" stroke-width="2"/><path d="M0 0l24 7-17 6-5 4z" fill="#aeb0b0"/></svg>
    <span class="ssep s4"></span>
    <button class="find" aria-label="Find"><svg width="34" height="32" viewBox="0 0 34 32"><path d="M8 1h6v6H8zM20 1h6v6h-6z" fill="#333"/><path d="M6 7h9v6h4V7h9l5 16v8h-11l-3-9h-4l-3 9H1v-8z" fill="#3d3d3d"/><path d="M8 10h3L8 25H4zM23 10h3l3 15h-4z" fill="#a2a2a2"/></svg></button>
    <span class="ssep"></span>
    <span class="count">3 selected</span>
    <span class="combo"><select aria-label="Selection filter"><option>Smart</option></select><svg class="car"><use href="#caret"/></svg></span>
    <svg class="grip" width="24" height="24" viewBox="0 0 24 24"><path d="M0 24 24 0M8 24 24 8M16 24l8-8" stroke="#c0c2c4" stroke-width="3"/></svg>
  </footer>
</div>
</body>
</html>
```
FILE: styles.css
```css
* { box-sizing: border-box; }

body {
  margin: 0;
  font: 22px/28px "Liberation Sans", Arial, sans-serif;
  color: #444448;
  background: #fcfcfc;
}

button, select { font: inherit; color: inherit; }
button { margin: 0; padding: 0; border: 0; background: none; cursor: pointer; }
h1, h2, p { margin: 0; }
svg { display: block; flex: none; }

.defs { position: absolute; width: 0; height: 0; }
.i24 { width: 24px; height: 24px; }
.i32 { width: 32px; height: 32px; }
.i64 { width: 64px; height: 64px; }
.car { width: 14px; height: 8px; }
.tw { width: 14px; height: 18px; }

.window {
  display: flex;
  flex-direction: column;
  min-height: 100vh;
  border: 2px solid #595959;
  outline: 6px solid #989898;
  outline-offset: -8px;
  padding: 6px;
  background: #fcfcfc;
}

.ib { display: flex; align-items: center; justify-content: center; min-width: 22px; height: 32px; }
.cb { display: flex; align-items: center; height: 32px; }
.split { display: flex; align-items: center; gap: 14px; }
.split.wide { gap: 18px; }

/* title bar */
.titlebar { display: flex; align-items: center; height: 64px; padding: 0 17px 0 24px; }
.vsep { width: 2px; height: 48px; margin: 0 14px 0 8px; background: #c9cbce; }
.quick { display: flex; gap: 16px; }
.quick > .ib { width: 32px; }
.more { margin-right: 14px; }
.title { flex: 1; font-size: 23px; font-weight: bold; color: #333336; }
.winctl { display: flex; gap: 22px; }
.winctl .ib { width: 32px; }

/* ribbon tabs */
.tabs { display: flex; align-items: flex-end; height: 58px; padding: 0 16px 0 8px; }
.tab {
  height: 42px;
  padding-right: 4px;
  border-top: 2px solid #c4c8cc;
  border-right: 2px solid #dfe1e4;
  background: #edeff1;
  color: #74747c;
  font-size: 23px;
  font-weight: bold;
  white-space: nowrap;
}
.file {
  display: flex;
  align-items: center;
  justify-content: center;
  gap: 6px;
  width: 88px;
  margin-right: 16px;
  padding-right: 0;
  border-left: 2px solid #c4c8cc;
  border-right-color: #c4c8cc;
  font-size: 24px;
  font-weight: normal;
}
.model {
  z-index: 1;
  width: 114px;
  height: 52px;
  margin-bottom: -2px;
  padding-top: 4px;
  border: 2px solid #c4c8cc;
  border-bottom: 0;
  border-radius: 3px 3px 0 0;
  background: #fcfcfc;
  color: #38383c;
}
.t-analysis { width: 144px; }
.t-annotate { width: 108px; }
.t-render { width: 130px; }
.t-tools { width: 106px; }
.t-metalink { width: 104px; }
.t-view { width: 104px; }
.t-flex { width: 240px; }
.t-apps { width: 158px; border-right-color: #c4c8cc; }
.help { display: flex; align-items: center; gap: 16px; height: 32px; margin: 0 0 16px auto; }

/* ribbon */
.ribbon { display: flex; height: 208px; margin: 0 8px; border: 2px solid #c4c8cc; font-size: 21px; }
.grp { display: flex; flex-direction: column; flex: none; border-right: 2px solid #dcdee1; }
.body { display: flex; flex: 1; gap: 16px; padding: 12px 0 0 14px; }
.body.center { justify-content: center; padding-left: 0; }
.foot {
  display: flex;
  align-items: center;
  justify-content: center;
  gap: 8px;
  height: 48px;
  border-top: 2px solid #c4c8cc;
  background: #edeff1;
}
.g-ops, .g-eng { width: 166px; }
.g-get { width: 128px; }
.g-datum { width: 252px; }
.g-shapes { width: 180px; }
.g-edit { width: 242px; }
.g-surf { width: 172px; }
.g-intent { width: 158px; }
.g-rest { flex: 1; border-right: 0; }
.col { display: flex; flex-direction: column; align-items: flex-start; gap: 18px; }
.row { display: flex; gap: 16px; }
.big { display: flex; flex-direction: column; align-items: center; min-width: 64px; height: 133px; }
.g-shapes .big { width: 74px; }
.g-edit .big { width: 66px; }
.g-surf .big { width: 94px; }
.big .i64 { margin-bottom: 13px; }
.big .car { margin-top: 10px; }

/* work area */
.main { display: flex; flex: 1; }
.side { display: flex; flex-direction: column; flex: 0 0 688px; padding: 26px 0 22px 8px; }
.sidetabs { display: flex; }
.stab {
  z-index: 1;
  display: flex;
  align-items: center;
  justify-content: center;
  width: 60px;
  height: 58px;
  border: 2px solid #c4c8cc;
  border-left: 0;
  border-bottom: 0;
  background: #edeff1;
}
.stab.on { height: 60px; margin-bottom: -2px; border-left: 2px solid #c4c8cc; background: #fcfcfc; }
.panel {
  display: flex;
  flex-direction: column;
  flex: 1;
  border: 2px solid #c4c8cc;
  border-right-width: 6px;
  border-bottom-width: 4px;
}
.phead { display: flex; align-items: center; gap: 24px; height: 58px; padding: 0 8px 0 40px; border-bottom: 2px solid #c4c8cc; }
.phead h2 { flex: 1; font-size: 23px; font-weight: bold; }
.tree { display: flex; flex-direction: column; flex: 1; padding: 14px 2px 4px 14px; }
table { width: 100%; border-collapse: separate; border-spacing: 0; table-layout: fixed; }
.c1 { width: 322px; }
.c3 { width: 48px; }
th {
  height: 40px;
  padding: 6px 0 0 12px;
  border-right: 2px solid #dfe2e5;
  border-bottom: 2px solid #c4c8cc;
  background: linear-gradient(#fdfdfd, #e8eaeb);
  font-size: 23px;
  text-align: left;
}
td { height: 40px; padding: 0 0 0 4px; font-size: 25px; white-space: nowrap; }
td:first-child { padding: 0; border-right: 2px solid #eaedf0; font-size: 22px; }
.node { display: flex; align-items: center; height: 40px; padding-left: 18px; }
.node i { flex: none; width: 28px; }
.node span { height: 40px; margin-left: 8px; padding: 0 4px 0 2px; line-height: 40px; }
.root { padding-left: 8px; }
.root span { margin-left: 10px; }
.caps { font-size: 20px; }
.off { color: #c6c6ca; }
.sel span { background: #b0e3ff; color: #28282c; }
.rest { flex: 1; width: 322px; border-right: 2px solid #eaedf0; }

/* graphics area */
.view { display: flex; flex-direction: column; flex: 1; min-width: 0; padding-top: 14px; }
.gbar { display: flex; align-self: center; height: 56px; margin-right: 8px; border: 2px solid #c4c8cc; background: #fff; }
.cap { width: 8px; background: #edeff1; }
.cap.end { width: 10px; border-left: 2px solid #c4c8cc; }
.cell {
  position: relative;
  display: flex;
  align-items: center;
  justify-content: center;
  width: 54px;
  border-left: 2px solid #c4c8cc;
}
.cell.w { width: 56px; padding-right: 2px; }
.cell.w::after {
  content: "";
  position: absolute;
  right: 4px;
  bottom: 6px;
  border: 3px solid #555;
  border-top-color: transparent;
  border-left-color: transparent;
}
.press {
  background: linear-gradient(#f3f3f4, #d9dadf);
  box-shadow: inset 0 0 0 2px #fff, inset 0 6px 0 #989898, inset 0 0 0 4px #b4b4b6;
}
.scene { width: 100%; }
.datum { fill: none; stroke: #35c94f; stroke-width: 1.6; shape-rendering: crispEdges; }

/* status bar */
.status { display: flex; align-items: center; height: 66px; padding: 0 4px 0 12px; border-top: 4px solid #989898; background: #edeff1; }
.sb {
  display: flex;
  align-items: center;
  justify-content: center;
  width: 44px;
  height: 44px;
  margin-right: 8px;
  border: 2px solid #c2c4c7;
  background: linear-gradient(#fff, #e9eaec);
}
.press2 { border-color: #b0b0b2; border-top: 4px solid #999; background: linear-gradient(#f3f3f4, #d9dadf); }
.ssep { width: 4px; height: 50px; border-left: 2px solid #d0d2d5; border-right: 2px solid #fbfbfb; }
.sb + .ssep { margin-left: 10px; }
.msg { display: flex; align-items: center; gap: 10px; flex: 1; padding-left: 12px; font-size: 21px; }
.dot { width: 10px; height: 10px; border-radius: 50%; background: #15658a; }
.s1 { margin-right: 56px; }
.lamp { margin: 0 8px; }
.flag { margin: 0 43px 0 9px; }
.find {
  display: flex;
  align-items: center;
  justify-content: center;
  width: 80px;
  height: 46px;
  margin: 0 4px;
  border: 2px solid #c4c7ca;
  border-bottom-color: #aaa;
  border-radius: 5px;
  background: linear-gradient(#fdfdfd, #e2e3e4);
}
.count { width: 192px; padding-left: 4px; }
.combo { display: flex; align-items: center; width: 304px; height: 42px; border: 2px solid #c4c8cc; background: linear-gradient(#fdfdfd, #eaebec); }
.combo select { flex: 1; height: 38px; padding: 0 14px; border: 0; border-right: 2px solid #c4c8cc; border-radius: 0; background: none; appearance: none; }
.combo .car { margin: 0 7px 0 6px; }
.grip { align-self: flex-end; margin: 0 0 8px 8px; }
```
